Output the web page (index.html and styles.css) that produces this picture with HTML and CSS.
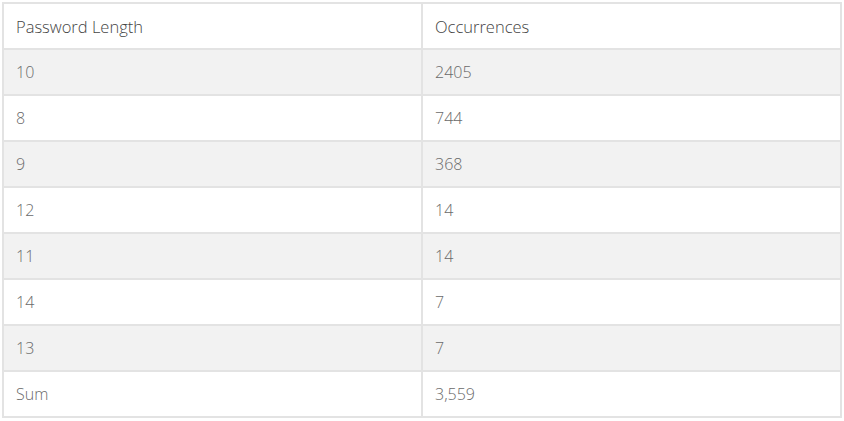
FILE: index.html
```html
<!DOCTYPE html>
<html>
<head>
<meta charset="utf-8">
<link rel="stylesheet" href="styles.css">
</head>
<body>
<table class="data">
  <thead>
    <tr><th class="c1">Password Length</th><th>Occurrences</th></tr>
  </thead>
  <tbody>
    <tr class="odd"><td>10</td><td>2405</td></tr>
    <tr><td>8</td><td>744</td></tr>
    <tr class="odd"><td>9</td><td>368</td></tr>
    <tr><td>12</td><td>14</td></tr>
    <tr class="odd"><td>11</td><td>14</td></tr>
    <tr><td>14</td><td>7</td></tr>
    <tr class="odd"><td>13</td><td>7</td></tr>
    <tr><td>Sum</td><td>3,559</td></tr>
  </tbody>
</table>
</body>
</html>
```
FILE: styles.css
```css
html, body { margin: 0; padding: 0; background: #fff; }
body { padding: 2px 0 0 2px; }
.data {
  border-collapse: collapse;
  width: 840px;
  font-family: "Open Sans", sans-serif;
  font-size: 16px;
  color: #6a6a6a;
  table-layout: fixed;
}
.data th, .data td {
  border: 2px solid #e3e3e3;
  padding: 0 12px;
  text-align: left;
  font-weight: 300;
  box-sizing: border-box;
  height: 46px;
}
.data th { color: #444; font-size: 16.5px; }
.data th.c1 { width: 419px; }
.data tr.odd td { background: #f2f2f2; }
```
